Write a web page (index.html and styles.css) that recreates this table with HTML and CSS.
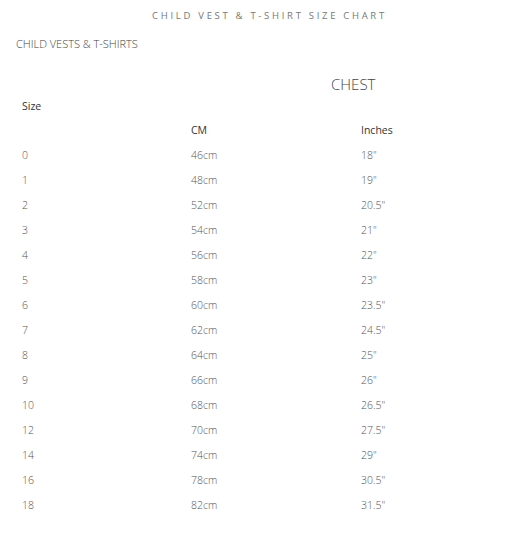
FILE: index.html
```html
<!DOCTYPE html>
<html>
<head>
<meta charset="utf-8">
<link rel="stylesheet" href="styles.css">
</head>
<body>
<div class="page">
  <h1 class="title">CHILD VEST &amp; T-SHIRT SIZE CHART</h1>
  <h2 class="subtitle">CHILD VESTS &amp; T-SHIRTS</h2>
  <div class="chest">CHEST</div>
  <div class="chart">
    <div class="row head size-row"><span>Size</span><span></span><span></span></div>
    <div class="row head"><span></span><span>CM</span><span>Inches</span></div>
    <div class="row"><span>0</span><span>46cm</span><span>18"</span></div>
    <div class="row"><span>1</span><span>48cm</span><span>19"</span></div>
    <div class="row"><span>2</span><span>52cm</span><span>20.5"</span></div>
    <div class="row"><span>3</span><span>54cm</span><span>21"</span></div>
    <div class="row"><span>4</span><span>56cm</span><span>22"</span></div>
    <div class="row"><span>5</span><span>58cm</span><span>23"</span></div>
    <div class="row"><span>6</span><span>60cm</span><span>23.5"</span></div>
    <div class="row"><span>7</span><span>62cm</span><span>24.5"</span></div>
    <div class="row"><span>8</span><span>64cm</span><span>25"</span></div>
    <div class="row"><span>9</span><span>66cm</span><span>26"</span></div>
    <div class="row"><span>10</span><span>68cm</span><span>26.5"</span></div>
    <div class="row"><span>12</span><span>70cm</span><span>27.5"</span></div>
    <div class="row"><span>14</span><span>74cm</span><span>29"</span></div>
    <div class="row"><span>16</span><span>78cm</span><span>30.5"</span></div>
    <div class="row"><span>18</span><span>82cm</span><span>31.5"</span></div>
  </div>
</div>
</body>
</html>
```
FILE: styles.css
```css
html, body {
  margin: 0;
  padding: 0;
  background: #fff;
}
.page {
  font-family: "Open Sans", "Liberation Sans", sans-serif;
  color: #555;
  width: 519px;
}
.title {
  margin: 0;
  padding: 9px 0 0 20px;
  height: 20px;
  line-height: 14px;
  font-size: 9.5px;
  font-weight: 400;
  letter-spacing: 2.7px;
  text-align: center;
  color: #777;
}
.subtitle {
  margin: 0;
  padding: 0 0 0 16px;
  height: 28px;
  line-height: 30px;
  font-size: 11px;
  font-weight: 300;
  color: #444;
}
.chest {
  padding: 19px 0 0 331px;
  height: 16px;
  line-height: 16px;
  font-size: 15px;
  font-weight: 300;
  color: #444;
}
.chart {
  display: flex;
  flex-direction: column;
  padding: 7px 0 0 22px;
}
.row {
  display: grid;
  grid-template-columns: 169px 170px 1fr;
  height: 25px;
  line-height: 14px;
  font-size: 10.5px;
  font-weight: 300;
  color: #555;
}
.row.size-row {
  height: 24px;
}
.row.head {
  font-weight: 500;
  color: #333;
}
```
